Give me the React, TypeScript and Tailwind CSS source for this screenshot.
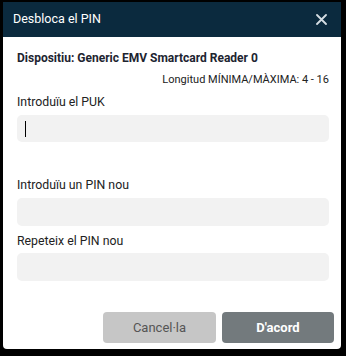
import React from "react";

export default function App() {
  return (
    <div className="h-[356px] w-[346px] bg-black pl-[3px] pt-[2px] pr-[5px] pb-[7px]" style={{ fontFamily: "Roboto, 'Liberation Sans', sans-serif" }}>
      <div className="flex h-full flex-col rounded-b-[4px] bg-white">
        <div className="flex h-[35px] items-center justify-between bg-[#0b2a3e] pl-[10px] pr-[14px]">
          <span className="text-[12.5px] text-white">Desbloca el PIN</span>
          <svg width="11" height="11" viewBox="0 0 11 11" className="text-[#d5dde3]">
            <path d="M1 1L10 10M10 1L1 10" stroke="currentColor" strokeWidth="1.8" strokeLinecap="round" />
          </svg>
        </div>
        <div className="flex flex-col pl-[14px] pr-[12px] text-[#222]">
          <div className="mt-[13px] text-[12px] leading-[16px] font-bold text-[#1d2430]">Dispositiu: Generic EMV Smartcard Reader 0</div>
          <div className="mt-[7px] text-right text-[11px] leading-[14px]">Longitud MÍNIMA/MÀXIMA: 4 - 16</div>
          <div className="mt-[7px] text-[12.3px] leading-[16px]">Introduïu el PUK</div>
          <div className="mt-[5px] flex h-[27px] items-center rounded-[5px] bg-[#f2f2f2] pl-[8px]">
            <div className="h-[16px] w-[1px] bg-black" />
          </div>
          <div className="mt-[35px] text-[12.3px] leading-[16px]">Introduïu un PIN nou</div>
          <div className="mt-[5px] h-[28px] rounded-[5px] bg-[#f2f2f2]" />
          <div className="mt-[7px] text-[12.3px] leading-[16px]">Repeteix el PIN nou</div>
          <div className="mt-[4px] h-[28px] rounded-[5px] bg-[#f2f2f2]" />
        </div>
        <div className="mt-[31px] flex justify-end gap-[6px] pr-[7px]">
          <button className="h-[31px] w-[113px] rounded-[4px] bg-[#c6c6c6] text-[13px] text-[#555]">Cancel·la</button>
          <button className="h-[31px] w-[112px] rounded-[4px] bg-[#737a7d] text-[13px] font-bold text-white">D'acord</button>
        </div>
      </div>
    </div>
  );
}
